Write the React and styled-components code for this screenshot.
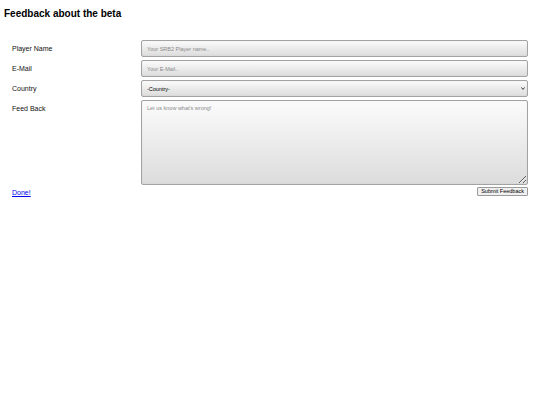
import React, { useState } from "react";
import styled, { createGlobalStyle } from "styled-components";

const GlobalStyle = createGlobalStyle`
  html, body {
    margin: 0;
    padding: 0;
    background: #ffffff;
    font-family: "Liberation Sans", Arial, sans-serif;
    color: #000;
  }
`;

const Page = styled.div`
  padding: 0 12px 0 4px;
`;

const Title = styled.h1`
  margin: 0;
  padding-top: 8px;
  font-size: 10px;
  line-height: 12px;
  font-weight: bold;
`;

const Form = styled.form`
  display: grid;
  grid-template-columns: 129px 1fr;
  row-gap: 3px;
  margin-top: 20px;
  padding-left: 8px;
`;

const Label = styled.label`
  font-size: 7px;
  line-height: 9px;
  padding-top: 4px;
  color: #111;
`;

const fieldStyle = `
  box-sizing: border-box;
  width: 100%;
  margin: 0;
  border: 1px solid #a3a3a3;
  border-radius: 2px;
  background: linear-gradient(to bottom, #fbfbfb, #dcdcdc);
  box-shadow: inset 0 0 1px rgba(0, 0, 0, 0.15);
  font-family: "Liberation Sans", Arial, sans-serif;
  font-size: 5.5px;
  color: #222;
  outline: none;
  &::placeholder {
    color: #8a8a8a;
  }
`;

const Input = styled.input`
  ${fieldStyle}
  height: 17px;
  padding: 0 5px;
`;

const SelectWrap = styled.div`
  position: relative;
`;

const Select = styled.select`
  ${fieldStyle}
  display: block;
  height: 17px;
  padding: 0 5px;
  color: #000;
  appearance: none;
  -webkit-appearance: none;
`;

const Arrow = styled.svg`
  position: absolute;
  right: 3px;
  top: 7px;
  width: 4px;
  height: 3px;
  pointer-events: none;
`;

const TextArea = styled.textarea`
  ${fieldStyle}
  height: 85px;
  padding: 4px 5px;
  resize: vertical;
  display: block;
`;

const Footer = styled.div`
  display: flex;
  justify-content: space-between;
  align-items: flex-start;
  padding-left: 8px;
  margin-top: 2px;
`;

const DoneLink = styled.a`
  font-size: 7px;
  line-height: 9px;
  color: #0000ee;
  text-decoration: underline;
  margin-top: 1px;
`;

const SubmitButton = styled.button`
  font-family: "Liberation Sans", Arial, sans-serif;
  font-size: 5.5px;
  height: 9px;
  padding: 0 3px;
  line-height: 7px;
  border: 1px solid #9a9a9a;
  border-radius: 1px;
  background: #f0f0f0;
  color: #000;
  margin-right: 0;
`;

export default function App() {
  const [country, setCountry] = useState("");

  return (
    <>
      <GlobalStyle />
      <Page>
        <Title>Feedback about the beta</Title>
        <Form onSubmit={(e) => e.preventDefault()}>
          <Label>Player Name</Label>
          <Input type="text" placeholder="Your SRB2 Player name.." />

          <Label>E-Mail</Label>
          <Input type="email" placeholder="Your E-Mail.." />

          <Label>Country</Label>
          <SelectWrap>
            <Select value={country} onChange={(e) => setCountry(e.target.value)}>
              <option value="">-Country-</option>
              <option value="us">United States</option>
              <option value="uk">United Kingdom</option>
            </Select>
            <Arrow viewBox="0 0 4 3">
              <path d="M0.3 0.4 L2 2.4 L3.7 0.4" fill="none" stroke="#222" strokeWidth="0.9" />
            </Arrow>
          </SelectWrap>

          <Label>Feed Back</Label>
          <TextArea placeholder="Let us know what's wrong!" />
        </Form>
        <Footer>
          <DoneLink href="#">Done!</DoneLink>
          <SubmitButton type="submit">Submit Feedback</SubmitButton>
        </Footer>
      </Page>
    </>
  );
}
